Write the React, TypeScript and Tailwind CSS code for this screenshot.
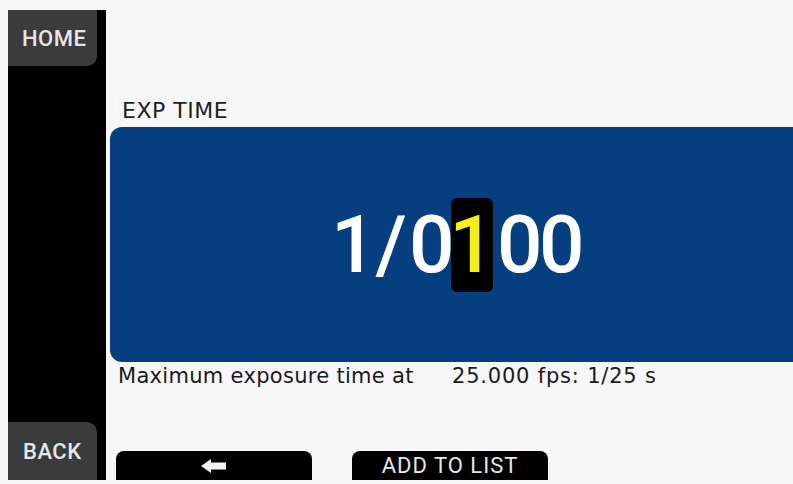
export default function App() {
  const font = { fontFamily: 'Roboto, "Liberation Sans", sans-serif' }
  const wide = { fontFamily: '"DejaVu Sans", Roboto, sans-serif' }
  return (
    <div className="w-[793px] h-[484px] overflow-hidden bg-[#f7f7f7] flex pt-[10px] pl-[8px] pb-[4px]" style={font}>
      {/* side rail */}
      <div className="w-[98px] bg-black flex flex-col justify-between">
        <div className="w-[89px] h-[56px] bg-[#3b3b3b] rounded-br-[10px] flex items-center pl-[14px] text-[22px] font-medium text-[#e6e6e6] tracking-[0.5px]">
          HOME
        </div>
        <div className="w-[89px] h-[58px] bg-[#3b3b3b] rounded-tr-[10px] flex items-center pl-[15px] text-[22px] font-medium text-[#e6e6e6] tracking-[0.5px]">
          BACK
        </div>
      </div>

      <div className="flex-1 flex flex-col pt-[86px]">
        <div className="h-[28px] flex items-center pl-[16px] text-[22px] tracking-[0.5px] text-[#1e1e1e]" style={wide}>EXP TIME</div>

        <div className="mt-[3px] ml-[4px] h-[235px] bg-[#053f7f] rounded-l-[12px] flex items-center justify-center pl-[10px]">
          <div className="flex items-center text-[80px] font-medium text-white leading-none">
            <span className="w-[42px] text-center">1</span>
            <span className="w-[36px] text-center">/</span>
            <span className="w-[42px] text-center">0</span>
            <span className="w-[42px] h-[94px] bg-black rounded-[6px] text-[#f5f019] flex items-center justify-center">1</span>
            <span className="w-[46px] text-center pl-[4px]">0</span>
            <span className="w-[43px] text-center">0</span>
          </div>
        </div>

        <div className="h-[30px] flex items-center pl-[12px] text-[21px] text-[#1a1a1a]" style={wide}>
          <span className="w-[334px] tracking-[0.3px]">Maximum exposure time at</span>
          <span className="tracking-[0.8px]">25.000 fps: 1/25 s</span>
        </div>

        <div className="mt-auto flex gap-[40px] pl-[10px]">
          <div className="w-[196px] h-[29px] bg-black rounded-t-[8px] flex items-center justify-center">
            <svg width="28" height="16" viewBox="0 0 28 16">
              <path d="M1 8 L11 1 L11 4.5 L26 4.5 L26 11.5 L11 11.5 L11 15 Z" fill="#f2f2f2" />
            </svg>
          </div>
          <div className="w-[196px] h-[29px] bg-black rounded-t-[8px] flex items-center justify-center text-[22px] text-[#e6e6e6] tracking-[1px]">
            ADD TO LIST
          </div>
        </div>
      </div>
    </div>
  )
}
